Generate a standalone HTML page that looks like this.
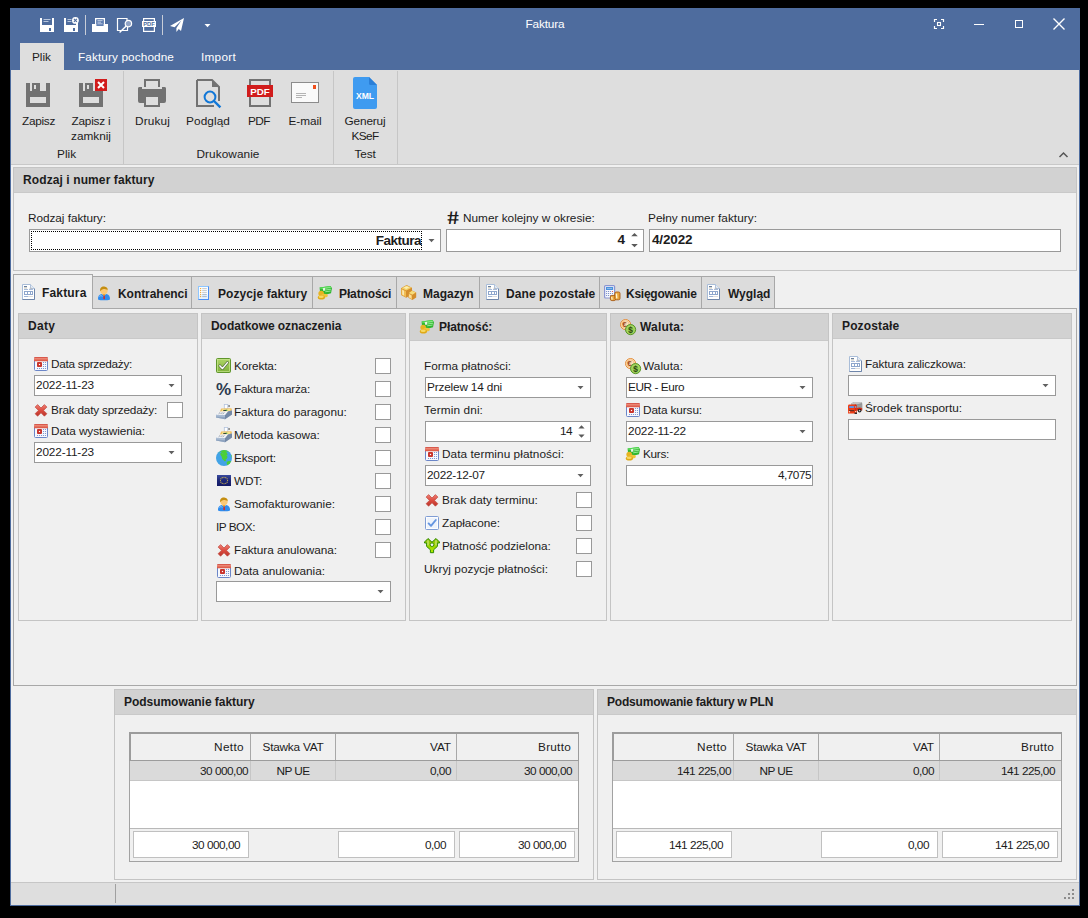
<!DOCTYPE html>
<html lang="pl"><head><meta charset="utf-8"><title>Faktura</title>
<style>
html,body{margin:0;padding:0;background:#000;}
body{width:1088px;height:918px;position:relative;overflow:hidden;font-family:"Liberation Sans",sans-serif;font-size:11.8px;color:#1c1c1c;}
div{position:absolute;box-sizing:border-box;}
.g{left:0;top:0;width:1088px;height:918px;}
.t{white-space:nowrap;line-height:16px;height:16px;}
.b{font-weight:bold;font-size:12px;}
.c{text-align:center;}
.w{color:#fff;}
svg{position:absolute;overflow:visible;}
.inp{background:#fff;border:1px solid #999;}
.chk{background:#fff;border:1px solid #999;}
</style></head><body>
<div class="g window">
<div style="left:10px;top:8px;width:1070px;height:898px;background:#f0f0f0;"></div>
<div style="left:10px;top:8px;width:1070px;height:62px;background:#4e6c9e;"></div>
<div style="left:10px;top:8px;width:1px;height:898px;background:#4e6c9e;"></div>
<div style="left:1079px;top:8px;width:1px;height:898px;background:#4e6c9e;"></div>
<div style="left:10px;top:905px;width:1070px;height:1px;background:#4e6c9e;"></div>
<div class="g titlebar">
<div class="g quick-access">
<svg style="left:39px;top:17px" width="16" height="16" viewBox="0 0 16 16"><path fill-rule="evenodd" d="M1 1H3V8H13V1H15V15H1zM10 11V14H12V11z" fill="#fff"/><path d="M4.5 2.5H11.5M4.5 4.5H9.5" stroke="#b8c6dc" stroke-width="1"/></svg>
<svg style="left:63px;top:17px" width="16" height="16" viewBox="0 0 16 16"><path fill-rule="evenodd" d="M1 1H3V8H13V6H15V15H1zM10 11V14H12V11z" fill="#fff"/><path d="M4.5 2.5H8.5M4.5 4.5H8.5" stroke="#b8c6dc" stroke-width="1"/><circle cx="12.4" cy="3.4" r="3.4" fill="#fff"/><path d="M10.9 1.9L13.9 4.9M13.9 1.9L10.9 4.9" stroke="#4e6c9e" stroke-width="1.1"/></svg>
<svg style="left:91px;top:17px" width="18" height="16" viewBox="0 0 18 16"><path d="M1 7H17V15H1z" fill="#fff"/><path fill-rule="evenodd" d="M4 1H14V10H4zM5.4 2.4V9H12.6V2.4z" fill="#fff"/><rect x="5.4" y="2.4" width="7.2" height="6.6" fill="#5f7db0"/><path d="M6.5 3.6H11.5M6.5 5.2H10M6.5 6.8H11.5" stroke="#c3cfe4" stroke-width="0.9"/></svg>
<svg style="left:116px;top:17px" width="18" height="16" viewBox="0 0 18 16"><path d="M11 4V1.5H1.5V13.5H11.5V10" fill="none" stroke="#fff" stroke-width="1.2"/><circle cx="12.4" cy="6.6" r="3.2" fill="#8fa3c6" stroke="#fff" stroke-width="1.2"/><path d="M10.2 9L3.6 15.4" stroke="#fff" stroke-width="1.4"/></svg>
<svg style="left:141px;top:17px" width="16" height="16" viewBox="0 0 16 16"><rect x="2.6" y="1.6" width="10.8" height="12.8" fill="none" stroke="#fff" stroke-width="1.2"/><rect x="1" y="4" width="14" height="6" fill="#fff"/><text x="8" y="9.2" text-anchor="middle" font-family="Liberation Sans, sans-serif" font-weight="bold" font-size="5.8" fill="#4e6c9e">PDF</text></svg>
<svg style="left:169px;top:17px" width="16" height="16" viewBox="0 0 16 16"><path d="M15 1L1 9L5.6 10.2L12.4 3.6L7.4 11L7.4 15L9.8 12L12 14z" fill="#fff"/></svg>
<div style="left:85px;top:15px;width:1px;height:20px;background:#c8cdd8;"></div>
<div style="left:162px;top:15px;width:1px;height:20px;background:#c8cdd8;"></div>
<svg style="left:204px;top:24px" width="7" height="4" viewBox="0 0 7 4"><path d="M0.5 0h6L3.5 3.2z" fill="#fff"/></svg>
</div>
<div class="t c" style="left:445px;width:200px;top:16px;letter-spacing:-0.14px;color:#fff;">Faktura</div>
<div class="g window-buttons">
<svg style="left:934px;top:19px" width="10" height="10" viewBox="0 0 10 10"><path d="M0.5 3V0.5H3M7 0.5H9.5V3M9.5 7V9.5H7M3 9.5H0.5V7" fill="none" stroke="#fff" stroke-width="1.2"/><rect x="3.5" y="3.5" width="3" height="3" fill="none" stroke="#fff" stroke-width="1.1"/></svg>
<div style="left:974px;top:24px;width:10px;height:1px;background:#fff;"></div>
<div style="left:1015px;top:20px;width:8px;height:8px;border:1px solid #fff;"></div>
<svg style="left:1053px;top:18px" width="12" height="12" viewBox="0 0 12 12"><path d="M0.5 0.5L11.5 11.5M11.5 0.5L0.5 11.5" stroke="#fff" stroke-width="1.4"/></svg>
</div>
</div>
<div class="g ribbon">
<div style="left:20px;top:43px;width:44px;height:28px;background:#dedede;"></div>
<div class="t" style="left:32px;top:49px;">Plik</div>
<div class="t" style="left:78px;top:49px;letter-spacing:0.10px;color:#fff;">Faktury pochodne</div>
<div class="t" style="left:201px;top:49px;letter-spacing:0.26px;color:#fff;">Import</div>
<div style="left:11px;top:70px;width:1068px;height:95px;background:#dedede;border-bottom:1px solid #c8c8c8;"></div>
<div style="left:123px;top:71px;width:1px;height:93px;background:#c6c6c6;"></div>
<div style="left:333px;top:71px;width:1px;height:93px;background:#c6c6c6;"></div>
<div style="left:397px;top:71px;width:1px;height:93px;background:#c6c6c6;"></div>
<div class="t c" style="left:-61.5px;width:200px;top:113px;letter-spacing:-0.29px;">Zapisz</div>
<div class="t c" style="left:-9px;width:200px;top:113px;letter-spacing:-0.21px;">Zapisz i</div>
<div class="t c" style="left:-9px;width:200px;top:128px;">zamknij</div>
<div class="t c" style="left:-33.400000000000006px;width:200px;top:146px;">Plik</div>
<div class="t c" style="left:52.5px;width:200px;top:113px;letter-spacing:0.15px;">Drukuj</div>
<div class="t c" style="left:108px;width:200px;top:113px;letter-spacing:0.10px;">Podgląd</div>
<div class="t c" style="left:159px;width:200px;top:113px;letter-spacing:-0.60px;">PDF</div>
<div class="t c" style="left:205px;width:200px;top:113px;letter-spacing:-0.07px;">E-mail</div>
<div class="t c" style="left:128px;width:200px;top:146px;letter-spacing:0.07px;">Drukowanie</div>
<div class="t c" style="left:265px;width:200px;top:113px;letter-spacing:-0.14px;">Generuj</div>
<div class="t c" style="left:265px;width:200px;top:128px;letter-spacing:-0.60px;">KSeF</div>
<div class="t c" style="left:265px;width:200px;top:146px;letter-spacing:-0.16px;">Test</div>
<svg style="left:22px;top:79px" width="32" height="32" viewBox="0 0 32 32"><path fill-rule="evenodd" d="M4 4H8V12H24V4H28V28H4zM8 18V24H24V18z" fill="#727272"/><path fill-rule="evenodd" d="M10 4H18V12H10zM12 6V10H14V6z" fill="#727272"/></svg>
<svg style="left:75px;top:79px" width="32" height="32" viewBox="0 0 32 32"><path fill-rule="evenodd" d="M4 4H8V12H28V28H4zM8 18V24H24V18z" fill="#727272"/><path fill-rule="evenodd" d="M10 4H18V12H10zM12 6V10H14V6z" fill="#727272"/><rect x="20" y="0" width="12" height="12" fill="#d11c1c"/><path d="M23 3L29 9M29 3L23 9" stroke="#fff" stroke-width="2"/></svg>
<svg style="left:136px;top:77px" width="32" height="32" viewBox="0 0 32 32"><path d="M8 2H24V12H22V4H10V12H8z" fill="#727272"/><path fill-rule="evenodd" d="M4 10H28Q30 10 30 12V24Q30 26 28 26H24V30H8V26H4Q2 26 2 24V12Q2 10 4 10zM10 20V28H22V20z" fill="#727272"/><rect x="6" y="10" width="20" height="2" fill="#dedede"/><path d="M2 12Q2 10 4 10H6V12zM26 10H28Q30 10 30 12V12H26z" fill="#727272"/></svg>
<svg style="left:192px;top:77px" width="32" height="32" viewBox="0 0 32 32"><path d="M5 3H20L27 10V24M5 3V29H22" fill="none" stroke="#727272" stroke-width="2"/><path d="M20 3V10H27z" fill="#727272"/><circle cx="18" cy="20" r="5.4" fill="#dedede" stroke="#1177d7" stroke-width="2"/><path d="M22 24L28.4 30.4" stroke="#1177d7" stroke-width="2.4"/></svg>
<svg style="left:244px;top:77px" width="32" height="32" viewBox="0 0 32 32"><rect x="6" y="3" width="20" height="26" fill="none" stroke="#727272" stroke-width="2"/><rect x="3" y="8" width="26" height="12" fill="#d11c1c"/><text x="16" y="17.6" text-anchor="middle" font-family="Liberation Sans, sans-serif" font-weight="bold" font-size="9.8" fill="#fff">PDF</text></svg>
<svg style="left:289px;top:77px" width="32" height="32" viewBox="0 0 32 32"><rect x="2.5" y="5.5" width="27" height="20" fill="#fafafa" stroke="#8c8c8c"/><rect x="24" y="8" width="3" height="4" fill="#f0501e"/><path d="M7 16.5H17M7 18.5H17M7 20.5H13" stroke="#b4b4b4" stroke-width="1"/></svg>
<svg style="left:349px;top:77px" width="32" height="32" viewBox="0 0 32 32"><path d="M6 0H20L28 8V30Q28 32 26 32H6Q4 32 4 30V2Q4 0 6 0z" fill="#3f9bf0"/><path d="M20 0L28 8H21.5Q20 8 20 6.5z" fill="#2a7fd8"/><text x="16" y="22.2" text-anchor="middle" font-family="Liberation Sans, sans-serif" font-weight="bold" font-size="8.6" fill="#fff">XML</text></svg>
<svg style="left:1059px;top:152px" width="9" height="6" viewBox="0 0 9 6"><path d="M0.5 5L4.5 1L8.5 5" fill="none" stroke="#555" stroke-width="1.5"/></svg>
</div>
<div class="g panel-rodzaj">
<div style="left:13px;top:167px;width:1064px;height:104px;background:#f0f0f0;border:1px solid #c4c4c4;"></div>
<div style="left:14px;top:168px;width:1062px;height:25px;background:#d2d2d2;border-bottom:1px solid #c9c9c9;"></div>
<div class="t b" style="left:23px;top:172px;letter-spacing:0.10px;">Rodzaj i numer faktury</div>
<div class="t" style="left:28px;top:210px;letter-spacing:-0.05px;">Rodzaj faktury:</div>
<div class="t" style="left:463px;top:210px;">Numer kolejny w okresie:</div>
<div class="t" style="left:648px;top:210px;letter-spacing:0.04px;">Pełny numer faktury:</div>
<div class="inp" style="left:29px;top:229px;width:412px;height:23px;"></div>
<div style="left:31px;top:231px;width:391px;height:19px;border:1px dotted #000;"></div>
<svg style="left:428px;top:239px" width="7" height="4" viewBox="0 0 7 4"><path d="M0.5 0h6L3.5 3.2z" fill="#606060"/></svg>
<div class="inp" style="left:446px;top:229px;width:198px;height:23px;"></div>
<svg style="left:631px;top:233px" width="7" height="14" viewBox="0 0 7 14"><path d="M0.2 3.3L3.5 0L6.8 3.3zM0.2 10.9L3.5 14.2L6.8 10.9z" fill="#5a5a5a"/></svg>
<div class="inp" style="left:649px;top:229px;width:412px;height:23px;"></div>
<div class="t b" style="right:667px;top:233px;font-size:13.5px;letter-spacing:-0.5px;">Faktura</div>
<div class="t b" style="right:463px;top:232px;font-size:13.5px;">4</div>
<div class="t b" style="left:652px;top:232px;font-size:13.5px;letter-spacing:-0.15px;">4/2022</div>
<svg style="left:446px;top:211px" width="14" height="14" viewBox="0 0 14 14"><text x="0" y="13.5" transform="matrix(1.18 0 0.12 1 0.2 -0.3)" font-family="Liberation Sans, sans-serif" font-weight="bold" font-size="18.5" fill="#1c1c1c">#</text></svg>
</div>
<div class="g tabcontrol">
<div style="left:13px;top:308px;width:1064px;height:378px;background:#f0f0f0;border:1px solid #a8a8a8;"></div>
<div style="left:13px;top:274px;width:80px;height:35px;background:#f0f0f0;border:1px solid #a8a8a8;border-bottom:none;"></div>
<div class="t b" style="left:42px;top:285px;letter-spacing:0.16px;">Faktura</div>
<div style="left:92px;top:276px;width:100px;height:33px;background:#dcdcdc;border:1px solid #a8a8a8;"></div>
<div class="t b" style="left:118px;top:286px;letter-spacing:-0.05px;">Kontrahenci</div>
<div style="left:191px;top:276px;width:122px;height:33px;background:#dcdcdc;border:1px solid #a8a8a8;"></div>
<div class="t b" style="left:218px;top:286px;letter-spacing:0.08px;">Pozycje faktury</div>
<div style="left:312px;top:276px;width:85px;height:33px;background:#dcdcdc;border:1px solid #a8a8a8;"></div>
<div class="t b" style="left:339px;top:286px;letter-spacing:-0.12px;">Płatności</div>
<div style="left:396px;top:276px;width:84px;height:33px;background:#dcdcdc;border:1px solid #a8a8a8;"></div>
<div class="t b" style="left:423px;top:286px;letter-spacing:-0.01px;">Magazyn</div>
<div style="left:479px;top:276px;width:121px;height:33px;background:#dcdcdc;border:1px solid #a8a8a8;"></div>
<div class="t b" style="left:506px;top:286px;letter-spacing:0.08px;">Dane pozostałe</div>
<div style="left:599px;top:276px;width:103px;height:33px;background:#dcdcdc;border:1px solid #a8a8a8;"></div>
<div class="t b" style="left:626px;top:286px;letter-spacing:-0.25px;">Księgowanie</div>
<div style="left:701px;top:276px;width:74px;height:33px;background:#dcdcdc;border:1px solid #a8a8a8;"></div>
<div class="t b" style="left:728px;top:286px;">Wygląd</div>
<svg style="left:21px;top:284px" width="16" height="16" viewBox="0 0 16 16"><path d="M1.5 0.5H9.5L13.5 4.5V15.5H1.5z" fill="#fff" stroke="#a9bdd8"/><path d="M13.5 4.5V15.5H1.5" fill="none" stroke="#6f86aa"/><path d="M9.5 0.5V4.5H13.5" fill="#e6edf6" stroke="#a9bdd8" stroke-width="0.9"/><rect x="3" y="2" width="3" height="1" fill="#6a7f9f"/><rect x="3" y="3.4" width="3" height="1" fill="#b9b9ad"/><rect x="3" y="5" width="4" height="0.9" fill="#9fb4d6"/><rect x="8.6" y="3.8" width="2.6" height="0.9" fill="#b8b8b8"/><rect x="8" y="5" width="4" height="0.9" fill="#9fb4d6"/><rect x="3" y="7" width="9" height="4" fill="#8ea6cc"/><rect x="4" y="8" width="2" height="2" fill="#fff"/><rect x="7" y="8" width="2" height="2" fill="#fff"/><rect x="10" y="8" width="1" height="2" fill="#fff"/><rect x="3" y="12" width="4" height="1" fill="#9fb4d6"/><rect x="7" y="12" width="5" height="1" fill="#dddddd"/></svg>
<svg style="left:96px;top:285px" width="16" height="16" viewBox="0 0 16 16"><path d="M2 14.4C1.8 11.6 3 9.6 5.4 9L8 10.2L10.6 9C13 9.6 14.2 11.6 14 14.4C11 15.6 5 15.6 2 14.4z" fill="#2f8cee"/><path d="M3.4 11.4C4.4 10.4 5.6 10.6 6.4 11.4" stroke="#8cc6ff" stroke-width="1" fill="none"/><path d="M6.4 9.2L8 11L9.6 9.2L8 8.6z" fill="#f9a825"/><path d="M7.6 10.4H8.6L9 13.4L8.1 14.4L7.3 13.4z" fill="#e0261c"/><circle cx="8" cy="5.4" r="3.7" fill="#fbc978"/><path d="M4.2 6.2C3.6 3 5.6 1.2 8.2 1.4C10.6 1.6 12 3.2 11.6 5C10.4 4.2 8.6 4.4 7.4 4C6.2 4.4 5.2 5.2 4.2 6.2z" fill="#c48e12"/></svg>
<svg style="left:197px;top:284px" width="16" height="16" viewBox="0 0 16 16"><rect x="1" y="2" width="11" height="14" fill="#4a8ef5"/><path d="M1 2H12L11 3H2V15L1 16z" fill="#8fc6ff"/><rect x="2" y="3" width="9" height="12" fill="#fbfdff"/><rect x="2" y="11" width="9" height="4" fill="#e8f3fe"/><circle cx="3.6" cy="4.6" r="0.7" fill="#f5a21f"/><rect x="5.2" y="4.1" width="4.6" height="1" fill="#c6c9ce"/><circle cx="3.6" cy="6.6" r="0.7" fill="#f5a21f"/><rect x="5.2" y="6.1" width="4.6" height="1" fill="#c6c9ce"/><circle cx="3.6" cy="8.6" r="0.7" fill="#f5a21f"/><rect x="5.2" y="8.1" width="4.6" height="1" fill="#c6c9ce"/><circle cx="3.6" cy="10.6" r="0.7" fill="#f5a21f"/><rect x="5.2" y="10.1" width="4.6" height="1" fill="#a9b9cc"/><circle cx="3.6" cy="12.6" r="0.7" fill="#f5a21f"/><rect x="5.2" y="12.1" width="4.6" height="1" fill="#a9b9cc"/></svg>
<svg style="left:317px;top:285px" width="16" height="16" viewBox="0 0 16 16"><path d="M2.6 2.6L13.6 1L15 3.2L14 8.2L7.4 10L3 6.4z" fill="#2fb52f"/><path d="M2.6 2.6L13.6 1L14.4 2.4L3.6 4.2z" fill="#55d855"/><path d="M8.2 3.2L13.6 2.6M8.6 5L14 4.2M8.2 6.8L13.6 6" stroke="#9ff09f" stroke-width="0.9"/><path d="M5.6 3.2L8 2.8L8.4 5.6L6.4 6z" fill="#e8f5e8"/><ellipse cx="4.2" cy="8.4" rx="2.8" ry="2.6" fill="#e6b422"/><ellipse cx="7.6" cy="10.6" rx="3.2" ry="1.9" fill="#f0c53a"/><ellipse cx="4.4" cy="12.4" rx="3.6" ry="2.1" fill="#e0a916"/><ellipse cx="4.2" cy="11.8" rx="2.6" ry="1.2" fill="#f7d963"/></svg>
<svg style="left:401px;top:284px" width="16" height="16" viewBox="0 0 16 16"><path d="M0 4.2L5.6 1L11 3.8V10.6L5.2 13.8L0 11z" fill="#d48d2c"/><path d="M0.4 4.2L5.6 1.4L10.6 3.8L5.2 6.6z" fill="#f5d36a"/><path d="M2.6 3.6L5.6 2.2L8.2 3.6L5.2 5z" fill="#fbeeb4"/><path d="M0.4 4.8L5 7.2V13.2L0.4 10.8z" fill="#f1bd55"/><path d="M1.2 5.8L3 6.8V11.6L1.2 10.6z" fill="#fbe7ae"/><path d="M7.4 9L11 6.4L15.2 8.4V13.6L11.4 16L7.4 13.8z" fill="#d48d2c"/><path d="M7.8 9L11 6.8L14.8 8.6L11.4 10.8z" fill="#f7dc78"/><path d="M7.8 9.6L11 11.4V15.4L7.8 13.6z" fill="#f3c869"/><path d="M8.4 10.4L9.6 11.2V14L8.4 13.2z" fill="#fcecc0"/></svg>
<svg style="left:485px;top:284px" width="16" height="16" viewBox="0 0 16 16"><path d="M1.5 0.5H9.5L13.5 4.5V15.5H1.5z" fill="#fff" stroke="#a9bdd8"/><path d="M13.5 4.5V15.5H1.5" fill="none" stroke="#6f86aa"/><path d="M9.5 0.5V4.5H13.5" fill="#e6edf6" stroke="#a9bdd8" stroke-width="0.9"/><rect x="3" y="2" width="3" height="1" fill="#6a7f9f"/><rect x="3" y="3.4" width="3" height="1" fill="#b9b9ad"/><rect x="3" y="5" width="4" height="0.9" fill="#9fb4d6"/><rect x="8.6" y="3.8" width="2.6" height="0.9" fill="#b8b8b8"/><rect x="8" y="5" width="4" height="0.9" fill="#9fb4d6"/><rect x="3" y="7" width="9" height="4" fill="#8ea6cc"/><rect x="4" y="8" width="2" height="2" fill="#fff"/><rect x="7" y="8" width="2" height="2" fill="#fff"/><rect x="10" y="8" width="1" height="2" fill="#fff"/><rect x="3" y="12" width="4" height="1" fill="#9fb4d6"/><rect x="7" y="12" width="5" height="1" fill="#dddddd"/></svg>
<svg style="left:603px;top:284px" width="18" height="17" viewBox="0 0 18 17"><rect x="1.6" y="1.6" width="10" height="12.4" rx="1" fill="#f4f7fd" stroke="#8a95d2" stroke-width="1.2"/><rect x="3" y="3" width="7.2" height="3" fill="#4b92dc"/><rect x="4" y="4.1" width="5" height="0.8" fill="#9cc6f0"/><circle cx="3.6" cy="7.5" r="0.62" fill="#6c80c2"/><circle cx="3.6" cy="9.5" r="0.62" fill="#6c80c2"/><circle cx="3.6" cy="11.5" r="0.62" fill="#6c80c2"/><circle cx="5.55" cy="7.5" r="0.62" fill="#6c80c2"/><circle cx="5.55" cy="9.5" r="0.62" fill="#6c80c2"/><circle cx="5.55" cy="11.5" r="0.62" fill="#6c80c2"/><circle cx="7.5" cy="7.5" r="0.62" fill="#6c80c2"/><circle cx="7.5" cy="9.5" r="0.62" fill="#6c80c2"/><circle cx="7.5" cy="11.5" r="0.62" fill="#6c80c2"/><circle cx="9.5" cy="7.5" r="0.62" fill="#e8483c"/><circle cx="9.5" cy="9.5" r="0.62" fill="#6c80c2"/><circle cx="9.5" cy="11.5" r="0.62" fill="#6c80c2"/><rect x="7.4" y="11.4" width="5.2" height="5.2" rx="1.4" fill="#e9a63c" stroke="#a85a14" stroke-width="0.9"/><path d="M8.6 13L9.2 15.6" stroke="#fff3cf" stroke-width="1.2"/><rect x="11.8" y="8" width="5.2" height="7.8" rx="1.4" fill="#e9a63c" stroke="#a85a14" stroke-width="0.9"/><path d="M13.4 9.6L13.8 14.4" stroke="#fff3cf" stroke-width="1.4"/></svg>
<svg style="left:706px;top:284px" width="16" height="16" viewBox="0 0 16 16"><path d="M1.5 0.5H9.5L13.5 4.5V15.5H1.5z" fill="#fff" stroke="#a9bdd8"/><path d="M13.5 4.5V15.5H1.5" fill="none" stroke="#6f86aa"/><path d="M9.5 0.5V4.5H13.5" fill="#e6edf6" stroke="#a9bdd8" stroke-width="0.9"/><rect x="3" y="2" width="3" height="1" fill="#6a7f9f"/><rect x="3" y="3.4" width="3" height="1" fill="#b9b9ad"/><rect x="3" y="5" width="4" height="0.9" fill="#9fb4d6"/><rect x="8.6" y="3.8" width="2.6" height="0.9" fill="#b8b8b8"/><rect x="8" y="5" width="4" height="0.9" fill="#9fb4d6"/><rect x="3" y="7" width="9" height="4" fill="#8ea6cc"/><rect x="4" y="8" width="2" height="2" fill="#fff"/><rect x="7" y="8" width="2" height="2" fill="#fff"/><rect x="10" y="8" width="1" height="2" fill="#fff"/><rect x="3" y="12" width="4" height="1" fill="#9fb4d6"/><rect x="7" y="12" width="5" height="1" fill="#dddddd"/></svg>
<div class="g tabpage">
<div style="left:18px;top:313px;width:180px;height:308px;background:#f0f0f0;border:1px solid #c4c4c4;"></div>
<div style="left:19px;top:314px;width:178px;height:25px;background:#d2d2d2;border-bottom:1px solid #c9c9c9;"></div>
<div class="t b" style="left:28px;top:318px;letter-spacing:0.30px;">Daty</div>
<div style="left:201px;top:313px;width:205px;height:308px;background:#f0f0f0;border:1px solid #c4c4c4;"></div>
<div style="left:202px;top:314px;width:203px;height:25px;background:#d2d2d2;border-bottom:1px solid #c9c9c9;"></div>
<div class="t b" style="left:211px;top:318px;letter-spacing:-0.05px;">Dodatkowe oznaczenia</div>
<div style="left:409px;top:313px;width:198px;height:308px;background:#f0f0f0;border:1px solid #c4c4c4;"></div>
<div style="left:410px;top:314px;width:196px;height:27px;background:#d2d2d2;border-bottom:1px solid #c9c9c9;"></div>
<div class="t b" style="left:439px;top:319px;letter-spacing:-0.10px;">Płatność:</div>
<div style="left:610px;top:313px;width:219px;height:308px;background:#f0f0f0;border:1px solid #c4c4c4;"></div>
<div style="left:611px;top:314px;width:217px;height:27px;background:#d2d2d2;border-bottom:1px solid #c9c9c9;"></div>
<div class="t b" style="left:640px;top:319px;letter-spacing:0.19px;">Waluta:</div>
<div style="left:832px;top:313px;width:240px;height:308px;background:#f0f0f0;border:1px solid #c4c4c4;"></div>
<div style="left:833px;top:314px;width:238px;height:25px;background:#d2d2d2;border-bottom:1px solid #c9c9c9;"></div>
<div class="t b" style="left:842px;top:318px;letter-spacing:0.14px;">Pozostałe</div>
<div class="g group-daty">
<svg style="left:33px;top:356px" width="16" height="16" viewBox="0 0 16 16"><defs><linearGradient id="gcal" x1="0" y1="0" x2="0" y2="1"><stop offset="0" stop-color="#c9392f"/><stop offset="0.3" stop-color="#ee8a78"/><stop offset="1" stop-color="#d8503f"/></linearGradient></defs><rect x="1.5" y="1.5" width="13" height="13" rx="1" fill="#f7f9fe" stroke="#6b86c8"/><path d="M1 2.2Q1 1 2.2 1H13.8Q15 1 15 2.2V5.2H1z" fill="url(#gcal)"/><rect x="4" y="6" width="5" height="5" rx="0.9" fill="#c9332b"/><rect x="5.9" y="7.9" width="1.2" height="1.2" fill="#fff"/><circle cx="10.5" cy="6.5" r="0.62" fill="#6f88c8"/><circle cx="10.5" cy="8.5" r="0.62" fill="#6f88c8"/><circle cx="10.5" cy="10.5" r="0.62" fill="#6f88c8"/><circle cx="12.5" cy="6.5" r="0.62" fill="#6f88c8"/><circle cx="12.5" cy="8.5" r="0.62" fill="#6f88c8"/><circle cx="12.5" cy="10.5" r="0.62" fill="#6f88c8"/><circle cx="4.5" cy="12.5" r="0.62" fill="#6f88c8"/><circle cx="6.5" cy="12.5" r="0.62" fill="#6f88c8"/><circle cx="8.5" cy="12.5" r="0.62" fill="#6f88c8"/><circle cx="10.5" cy="12.5" r="0.62" fill="#6f88c8"/><circle cx="12.5" cy="12.5" r="0.62" fill="#6f88c8"/></svg>
<div class="t" style="left:51px;top:356px;letter-spacing:-0.28px;">Data sprzedaży:</div>
<div class="inp" style="left:34px;top:375px;width:148px;height:21px;"></div>
<div class="t" style="left:36px;top:377px;letter-spacing:-0.15px;">2022-11-23</div>
<svg style="left:168px;top:384px" width="7" height="4" viewBox="0 0 7 4"><path d="M0.5 0h6L3.5 3.2z" fill="#606060"/></svg>
<svg style="left:33px;top:402px" width="16" height="16" viewBox="0 0 16 16"><defs><linearGradient id="gx" x1="0" y1="0" x2="0" y2="1"><stop offset="0" stop-color="#ee8076"/><stop offset="0.5" stop-color="#dc4c40"/><stop offset="1" stop-color="#b9352b"/></linearGradient></defs><path d="M4.6 2.6L8 6L11.4 2.6L13.9 5.1L10.5 8.4L13.9 11.7L11.4 14.2L8 10.8L4.6 14.2L2.1 11.7L5.5 8.4L2.1 5.1z" fill="url(#gx)" stroke="#c0473d" stroke-width="0.7" stroke-linejoin="round"/></svg>
<div class="t" style="left:51px;top:402px;letter-spacing:-0.21px;">Brak daty sprzedaży:</div>
<div class="chk" style="left:167px;top:402px;width:16px;height:16px;"></div>
<svg style="left:33px;top:423px" width="16" height="16" viewBox="0 0 16 16"><defs><linearGradient id="gcal" x1="0" y1="0" x2="0" y2="1"><stop offset="0" stop-color="#c9392f"/><stop offset="0.3" stop-color="#ee8a78"/><stop offset="1" stop-color="#d8503f"/></linearGradient></defs><rect x="1.5" y="1.5" width="13" height="13" rx="1" fill="#f7f9fe" stroke="#6b86c8"/><path d="M1 2.2Q1 1 2.2 1H13.8Q15 1 15 2.2V5.2H1z" fill="url(#gcal)"/><rect x="4" y="6" width="5" height="5" rx="0.9" fill="#c9332b"/><rect x="5.9" y="7.9" width="1.2" height="1.2" fill="#fff"/><circle cx="10.5" cy="6.5" r="0.62" fill="#6f88c8"/><circle cx="10.5" cy="8.5" r="0.62" fill="#6f88c8"/><circle cx="10.5" cy="10.5" r="0.62" fill="#6f88c8"/><circle cx="12.5" cy="6.5" r="0.62" fill="#6f88c8"/><circle cx="12.5" cy="8.5" r="0.62" fill="#6f88c8"/><circle cx="12.5" cy="10.5" r="0.62" fill="#6f88c8"/><circle cx="4.5" cy="12.5" r="0.62" fill="#6f88c8"/><circle cx="6.5" cy="12.5" r="0.62" fill="#6f88c8"/><circle cx="8.5" cy="12.5" r="0.62" fill="#6f88c8"/><circle cx="10.5" cy="12.5" r="0.62" fill="#6f88c8"/><circle cx="12.5" cy="12.5" r="0.62" fill="#6f88c8"/></svg>
<div class="t" style="left:51px;top:423px;letter-spacing:-0.06px;">Data wystawienia:</div>
<div class="inp" style="left:34px;top:442px;width:148px;height:21px;"></div>
<div class="t" style="left:36px;top:444px;letter-spacing:-0.15px;">2022-11-23</div>
<svg style="left:168px;top:451px" width="7" height="4" viewBox="0 0 7 4"><path d="M0.5 0h6L3.5 3.2z" fill="#606060"/></svg>
</div>
<div class="g group-dodatkowe">
<svg style="left:216px;top:358px" width="16" height="16" viewBox="0 0 16 16"><defs><linearGradient id="gck" x1="0" y1="0" x2="0" y2="1"><stop offset="0" stop-color="#b0d768"/><stop offset="1" stop-color="#7db038"/></linearGradient></defs><rect x="0.5" y="0.5" width="14" height="14" rx="1" fill="url(#gck)" stroke="#5f962c"/><rect x="1.5" y="1.5" width="12" height="12" fill="none" stroke="#c9e690" stroke-width="0.7"/><path d="M3.8 7.8L6.4 10.6L11.4 4.6" fill="none" stroke="#5c7346" stroke-width="2.8" stroke-linecap="round" stroke-linejoin="round"/><path d="M3.8 7.8L6.4 10.6L11.4 4.6" fill="none" stroke="#fff" stroke-width="1.4" stroke-linecap="round" stroke-linejoin="round"/></svg>
<div class="t" style="left:234px;top:358px;letter-spacing:-0.12px;">Korekta:</div>
<div class="chk" style="left:375px;top:358px;width:16px;height:16px;"></div>
<svg style="left:216px;top:381px" width="16" height="16" viewBox="0 0 16 16"><text x="7.6" y="14" text-anchor="middle" font-family="Liberation Sans, sans-serif" font-weight="bold" font-size="17" fill="#2b3a4e">%</text></svg>
<div class="t" style="left:234px;top:381px;letter-spacing:-0.24px;">Faktura marża:</div>
<div class="chk" style="left:375px;top:381px;width:16px;height:16px;"></div>
<svg style="left:216px;top:404px" width="16" height="16" viewBox="0 0 16 16"><rect x="8.3" y="0.4" width="3.5" height="4.6" fill="#fdfeff" stroke="#b4c3dc" stroke-width="0.8"/><rect x="12.2" y="1.2" width="1.8" height="1.6" fill="#7f7f7f"/><path d="M5.2 4.4L15.4 4.2L16 6L15 7.6L3.8 7.8z" fill="#f0bf62"/><path d="M6.4 5.2L14.4 5L14 6.8L5.8 7z" fill="#f7e78e"/><path d="M7.4 5.9L11.2 5.7L11 6.9L7.2 7z" fill="#34463a"/><rect x="10" y="5.9" width="1.2" height="0.9" fill="#4fc04a"/><path d="M0 10.4L9 11L12 7.4L16 6.4V10.6L9 15.2L0 13.6z" fill="#a9bbd2"/><path d="M9 11L12 7.4L16 6.4V10.6L9 15.2z" fill="#7489a6"/><path d="M0 12.4L9 13.2L9 15.2L0 13.6z" fill="#8ea3bf"/><path d="M1.4 8.4L4.6 7.4L12 7.3L9 11L0.4 10.4z" fill="#f1f3f6"/><path d="M2.6 9.8L4.2 8.4M4.6 10L6.2 8.4M6.6 10.2L8.2 8.4" stroke="#8b95a3" stroke-width="0.9"/></svg>
<div class="t" style="left:234px;top:404px;">Faktura do paragonu:</div>
<div class="chk" style="left:375px;top:404px;width:16px;height:16px;"></div>
<svg style="left:216px;top:427px" width="16" height="16" viewBox="0 0 16 16"><rect x="8.3" y="0.4" width="3.5" height="4.6" fill="#fdfeff" stroke="#b4c3dc" stroke-width="0.8"/><rect x="12.2" y="1.2" width="1.8" height="1.6" fill="#7f7f7f"/><path d="M5.2 4.4L15.4 4.2L16 6L15 7.6L3.8 7.8z" fill="#f0bf62"/><path d="M6.4 5.2L14.4 5L14 6.8L5.8 7z" fill="#f7e78e"/><path d="M7.4 5.9L11.2 5.7L11 6.9L7.2 7z" fill="#34463a"/><rect x="10" y="5.9" width="1.2" height="0.9" fill="#4fc04a"/><path d="M0 10.4L9 11L12 7.4L16 6.4V10.6L9 15.2L0 13.6z" fill="#a9bbd2"/><path d="M9 11L12 7.4L16 6.4V10.6L9 15.2z" fill="#7489a6"/><path d="M0 12.4L9 13.2L9 15.2L0 13.6z" fill="#8ea3bf"/><path d="M1.4 8.4L4.6 7.4L12 7.3L9 11L0.4 10.4z" fill="#f1f3f6"/><path d="M2.6 9.8L4.2 8.4M4.6 10L6.2 8.4M6.6 10.2L8.2 8.4" stroke="#8b95a3" stroke-width="0.9"/></svg>
<div class="t" style="left:234px;top:427px;">Metoda kasowa:</div>
<div class="chk" style="left:375px;top:427px;width:16px;height:16px;"></div>
<svg style="left:216px;top:450px" width="16" height="16" viewBox="0 0 16 16"><defs><clipPath id="cgl"><circle cx="8" cy="8" r="8"/></clipPath></defs><circle cx="8" cy="8" r="8" fill="#42a3e6"/><g clip-path="url(#cgl)" fill="#4ccf35"><path d="M2.4 3.4C4 0.6 7 -0.4 9 -0.2C11.4 0 13.4 1.4 14.6 3.2C13 2 11.6 1.6 10.4 1.6L10.2 3C8.8 3 7 3.2 5.8 3C5.2 2.4 5.6 1.6 5.2 1.4C4.2 1.8 3.2 2.6 2.4 3.4z"/><path d="M4.2 3.4L5.4 2.6L6.6 3.4L8.8 2.4L11 2.6L11.6 5.2L10 5.6L11.6 6.8L10.8 8.8L9.4 9.4L10.2 10.8L8.8 11.6L7.4 10L6.2 9L5.6 6.6L4.6 5.2z"/><path d="M10.8 11.8L13 11L15.4 11.2L14 14L11.6 15.4L10.6 13.2z"/><path d="M15 4.6L16.4 5V8.4L15.4 7z"/></g></svg>
<div class="t" style="left:234px;top:450px;letter-spacing:-0.16px;">Eksport:</div>
<div class="chk" style="left:375px;top:450px;width:16px;height:16px;"></div>
<svg style="left:216px;top:473px" width="16" height="16" viewBox="0 0 16 16"><defs><linearGradient id="geu" x1="0" y1="0" x2="0" y2="1"><stop offset="0" stop-color="#3a4a9e"/><stop offset="0.5" stop-color="#1c2676"/><stop offset="1" stop-color="#141a66"/></linearGradient></defs><rect x="1" y="2" width="14" height="11" fill="url(#geu)"/><circle cx="11.60" cy="7.50" r="0.55" fill="#e7c84a"/><circle cx="11.12" cy="9.15" r="0.55" fill="#e7c84a"/><circle cx="9.80" cy="10.36" r="0.55" fill="#e7c84a"/><circle cx="8.00" cy="10.80" r="0.55" fill="#e7c84a"/><circle cx="6.20" cy="10.36" r="0.55" fill="#e7c84a"/><circle cx="4.88" cy="9.15" r="0.55" fill="#e7c84a"/><circle cx="4.40" cy="7.50" r="0.55" fill="#e7c84a"/><circle cx="4.88" cy="5.85" r="0.55" fill="#e7c84a"/><circle cx="6.20" cy="4.64" r="0.55" fill="#e7c84a"/><circle cx="8.00" cy="4.20" r="0.55" fill="#e7c84a"/><circle cx="9.80" cy="4.64" r="0.55" fill="#e7c84a"/><circle cx="11.12" cy="5.85" r="0.55" fill="#e7c84a"/></svg>
<div class="t" style="left:234px;top:473px;letter-spacing:-0.21px;">WDT:</div>
<div class="chk" style="left:375px;top:473px;width:16px;height:16px;"></div>
<svg style="left:216px;top:496px" width="16" height="16" viewBox="0 0 16 16"><path d="M2 14.4C1.8 11.6 3 9.6 5.4 9L8 10.2L10.6 9C13 9.6 14.2 11.6 14 14.4C11 15.6 5 15.6 2 14.4z" fill="#2f8cee"/><path d="M3.4 11.4C4.4 10.4 5.6 10.6 6.4 11.4" stroke="#8cc6ff" stroke-width="1" fill="none"/><path d="M6.4 9.2L8 11L9.6 9.2L8 8.6z" fill="#f9a825"/><path d="M7.6 10.4H8.6L9 13.4L8.1 14.4L7.3 13.4z" fill="#e0261c"/><circle cx="8" cy="5.4" r="3.7" fill="#fbc978"/><path d="M4.2 6.2C3.6 3 5.6 1.2 8.2 1.4C10.6 1.6 12 3.2 11.6 5C10.4 4.2 8.6 4.4 7.4 4C6.2 4.4 5.2 5.2 4.2 6.2z" fill="#c48e12"/></svg>
<div class="t" style="left:234px;top:496px;">Samofakturowanie:</div>
<div class="chk" style="left:375px;top:496px;width:16px;height:16px;"></div>
<div class="t" style="left:216px;top:519px;letter-spacing:-0.49px;">IP BOX:</div>
<div class="chk" style="left:375px;top:519px;width:16px;height:16px;"></div>
<svg style="left:216px;top:542px" width="16" height="16" viewBox="0 0 16 16"><defs><linearGradient id="gx" x1="0" y1="0" x2="0" y2="1"><stop offset="0" stop-color="#ee8076"/><stop offset="0.5" stop-color="#dc4c40"/><stop offset="1" stop-color="#b9352b"/></linearGradient></defs><path d="M4.6 2.6L8 6L11.4 2.6L13.9 5.1L10.5 8.4L13.9 11.7L11.4 14.2L8 10.8L4.6 14.2L2.1 11.7L5.5 8.4L2.1 5.1z" fill="url(#gx)" stroke="#c0473d" stroke-width="0.7" stroke-linejoin="round"/></svg>
<div class="t" style="left:234px;top:542px;letter-spacing:-0.03px;">Faktura anulowana:</div>
<div class="chk" style="left:375px;top:542px;width:16px;height:16px;"></div>
<svg style="left:216px;top:563px" width="16" height="16" viewBox="0 0 16 16"><defs><linearGradient id="gcal" x1="0" y1="0" x2="0" y2="1"><stop offset="0" stop-color="#c9392f"/><stop offset="0.3" stop-color="#ee8a78"/><stop offset="1" stop-color="#d8503f"/></linearGradient></defs><rect x="1.5" y="1.5" width="13" height="13" rx="1" fill="#f7f9fe" stroke="#6b86c8"/><path d="M1 2.2Q1 1 2.2 1H13.8Q15 1 15 2.2V5.2H1z" fill="url(#gcal)"/><rect x="4" y="6" width="5" height="5" rx="0.9" fill="#c9332b"/><rect x="5.9" y="7.9" width="1.2" height="1.2" fill="#fff"/><circle cx="10.5" cy="6.5" r="0.62" fill="#6f88c8"/><circle cx="10.5" cy="8.5" r="0.62" fill="#6f88c8"/><circle cx="10.5" cy="10.5" r="0.62" fill="#6f88c8"/><circle cx="12.5" cy="6.5" r="0.62" fill="#6f88c8"/><circle cx="12.5" cy="8.5" r="0.62" fill="#6f88c8"/><circle cx="12.5" cy="10.5" r="0.62" fill="#6f88c8"/><circle cx="4.5" cy="12.5" r="0.62" fill="#6f88c8"/><circle cx="6.5" cy="12.5" r="0.62" fill="#6f88c8"/><circle cx="8.5" cy="12.5" r="0.62" fill="#6f88c8"/><circle cx="10.5" cy="12.5" r="0.62" fill="#6f88c8"/><circle cx="12.5" cy="12.5" r="0.62" fill="#6f88c8"/></svg>
<div class="t" style="left:234px;top:563px;letter-spacing:-0.01px;">Data anulowania:</div>
<div class="inp" style="left:216px;top:581px;width:175px;height:21px;"></div>
<svg style="left:377px;top:590px" width="7" height="4" viewBox="0 0 7 4"><path d="M0.5 0h6L3.5 3.2z" fill="#606060"/></svg>
</div>
<div class="g group-platnosc">
<svg style="left:419px;top:319px" width="16" height="16" viewBox="0 0 16 16"><path d="M2.6 2.6L13.6 1L15 3.2L14 8.2L7.4 10L3 6.4z" fill="#2fb52f"/><path d="M2.6 2.6L13.6 1L14.4 2.4L3.6 4.2z" fill="#55d855"/><path d="M8.2 3.2L13.6 2.6M8.6 5L14 4.2M8.2 6.8L13.6 6" stroke="#9ff09f" stroke-width="0.9"/><path d="M5.6 3.2L8 2.8L8.4 5.6L6.4 6z" fill="#e8f5e8"/><ellipse cx="4.2" cy="8.4" rx="2.8" ry="2.6" fill="#e6b422"/><ellipse cx="7.6" cy="10.6" rx="3.2" ry="1.9" fill="#f0c53a"/><ellipse cx="4.4" cy="12.4" rx="3.6" ry="2.1" fill="#e0a916"/><ellipse cx="4.2" cy="11.8" rx="2.6" ry="1.2" fill="#f7d963"/></svg>
<div class="t" style="left:424px;top:358px;letter-spacing:-0.01px;">Forma płatności:</div>
<div class="inp" style="left:425px;top:377px;width:166px;height:21px;"></div>
<div class="t" style="left:427px;top:379px;letter-spacing:-0.17px;">Przelew 14 dni</div>
<svg style="left:577px;top:386px" width="7" height="4" viewBox="0 0 7 4"><path d="M0.5 0h6L3.5 3.2z" fill="#606060"/></svg>
<div class="t" style="left:424px;top:402px;letter-spacing:0.12px;">Termin dni:</div>
<div class="inp" style="left:425px;top:421px;width:166px;height:21px;"></div>
<div class="t" style="right:516px;top:423px;letter-spacing:-0.56px;">14</div>
<svg style="left:578px;top:425px" width="7" height="13" viewBox="0 0 7 13"><path d="M0.4 3.4L3.5 0.3L6.6 3.4zM0.4 9.6L3.5 12.7L6.6 9.6z" fill="#5a5a5a"/></svg>
<svg style="left:424px;top:446px" width="16" height="16" viewBox="0 0 16 16"><defs><linearGradient id="gcal" x1="0" y1="0" x2="0" y2="1"><stop offset="0" stop-color="#c9392f"/><stop offset="0.3" stop-color="#ee8a78"/><stop offset="1" stop-color="#d8503f"/></linearGradient></defs><rect x="1.5" y="1.5" width="13" height="13" rx="1" fill="#f7f9fe" stroke="#6b86c8"/><path d="M1 2.2Q1 1 2.2 1H13.8Q15 1 15 2.2V5.2H1z" fill="url(#gcal)"/><rect x="4" y="6" width="5" height="5" rx="0.9" fill="#c9332b"/><rect x="5.9" y="7.9" width="1.2" height="1.2" fill="#fff"/><circle cx="10.5" cy="6.5" r="0.62" fill="#6f88c8"/><circle cx="10.5" cy="8.5" r="0.62" fill="#6f88c8"/><circle cx="10.5" cy="10.5" r="0.62" fill="#6f88c8"/><circle cx="12.5" cy="6.5" r="0.62" fill="#6f88c8"/><circle cx="12.5" cy="8.5" r="0.62" fill="#6f88c8"/><circle cx="12.5" cy="10.5" r="0.62" fill="#6f88c8"/><circle cx="4.5" cy="12.5" r="0.62" fill="#6f88c8"/><circle cx="6.5" cy="12.5" r="0.62" fill="#6f88c8"/><circle cx="8.5" cy="12.5" r="0.62" fill="#6f88c8"/><circle cx="10.5" cy="12.5" r="0.62" fill="#6f88c8"/><circle cx="12.5" cy="12.5" r="0.62" fill="#6f88c8"/></svg>
<div class="t" style="left:442px;top:446px;letter-spacing:0.06px;">Data terminu płatności:</div>
<div class="inp" style="left:425px;top:465px;width:166px;height:21px;"></div>
<div class="t" style="left:427px;top:467px;letter-spacing:-0.24px;">2022-12-07</div>
<svg style="left:577px;top:474px" width="7" height="4" viewBox="0 0 7 4"><path d="M0.5 0h6L3.5 3.2z" fill="#606060"/></svg>
<svg style="left:424px;top:492px" width="16" height="16" viewBox="0 0 16 16"><defs><linearGradient id="gx" x1="0" y1="0" x2="0" y2="1"><stop offset="0" stop-color="#ee8076"/><stop offset="0.5" stop-color="#dc4c40"/><stop offset="1" stop-color="#b9352b"/></linearGradient></defs><path d="M4.6 2.6L8 6L11.4 2.6L13.9 5.1L10.5 8.4L13.9 11.7L11.4 14.2L8 10.8L4.6 14.2L2.1 11.7L5.5 8.4L2.1 5.1z" fill="url(#gx)" stroke="#c0473d" stroke-width="0.7" stroke-linejoin="round"/></svg>
<div class="t" style="left:442px;top:492px;letter-spacing:0.01px;">Brak daty terminu:</div>
<div class="chk" style="left:576px;top:492px;width:16px;height:16px;"></div>
<svg style="left:424px;top:515px" width="16" height="16" viewBox="0 0 16 16"><rect x="1.5" y="1.5" width="13" height="13" rx="1" fill="#eef3fb" stroke="#809dd4"/><rect x="2.5" y="2.5" width="11" height="11" fill="none" stroke="#fff" stroke-width="0.8"/><path d="M4.6 8.4L7 10.8L11.8 5" fill="none" stroke="#6495e0" stroke-width="1.9" stroke-linecap="round" stroke-linejoin="round"/></svg>
<div class="t" style="left:442px;top:515px;letter-spacing:-0.04px;">Zapłacone:</div>
<div class="chk" style="left:576px;top:515px;width:16px;height:16px;"></div>
<svg style="left:424px;top:538px" width="16" height="16" viewBox="0 0 16 16"><defs><linearGradient id="gsp" x1="0" y1="0" x2="0" y2="1"><stop offset="0" stop-color="#8cc200"/><stop offset="0.5" stop-color="#9ad000"/><stop offset="1" stop-color="#b2f000"/></linearGradient></defs><path d="M4 0.5L8 4.2L12 0.5L15.5 4V5H13.4V8.4L9.6 11.8V14.7H6.4V11.8L2.6 8.4V5H0.5V4z" fill="url(#gsp)" stroke="#2f8a00" stroke-width="1" stroke-linejoin="round"/><path d="M4 2.2V7.4M12 2.2V7.4" stroke="#d8ee9a" stroke-width="1"/><circle cx="8" cy="6.7" r="1.8" fill="#f4f4f4" stroke="#2f8a00" stroke-width="0.9"/></svg>
<div class="t" style="left:442px;top:538px;">Płatność podzielona:</div>
<div class="chk" style="left:576px;top:538px;width:16px;height:16px;"></div>
<div class="t" style="left:424px;top:561px;letter-spacing:0.03px;">Ukryj pozycje płatności:</div>
<div class="chk" style="left:576px;top:561px;width:16px;height:16px;"></div>
</div>
<div class="g group-waluta">
<svg style="left:620px;top:319px" width="16" height="16" viewBox="0 0 16 16"><circle cx="5.6" cy="5.6" r="5.1" fill="#fbe0b6" stroke="#e48e3e" stroke-width="1"/><circle cx="5.6" cy="5.6" r="3.7" fill="none" stroke="#f0b57a" stroke-width="0.7"/><text x="4.6" y="8.4" text-anchor="middle" font-family="Liberation Sans, sans-serif" font-weight="bold" font-size="8" fill="#a24d1c">€</text><circle cx="10.6" cy="10.6" r="5.1" fill="#94c94e" stroke="#5a962b" stroke-width="1"/><circle cx="10.6" cy="10.6" r="3.7" fill="none" stroke="#b4de76" stroke-width="0.7"/><text x="10.6" y="13.6" text-anchor="middle" font-family="Liberation Sans, sans-serif" font-weight="bold" font-size="8.2" fill="#2c4a12">$</text></svg>
<svg style="left:625px;top:358px" width="16" height="16" viewBox="0 0 16 16"><circle cx="5.6" cy="5.6" r="5.1" fill="#fbe0b6" stroke="#e48e3e" stroke-width="1"/><circle cx="5.6" cy="5.6" r="3.7" fill="none" stroke="#f0b57a" stroke-width="0.7"/><text x="4.6" y="8.4" text-anchor="middle" font-family="Liberation Sans, sans-serif" font-weight="bold" font-size="8" fill="#a24d1c">€</text><circle cx="10.6" cy="10.6" r="5.1" fill="#94c94e" stroke="#5a962b" stroke-width="1"/><circle cx="10.6" cy="10.6" r="3.7" fill="none" stroke="#b4de76" stroke-width="0.7"/><text x="10.6" y="13.6" text-anchor="middle" font-family="Liberation Sans, sans-serif" font-weight="bold" font-size="8.2" fill="#2c4a12">$</text></svg>
<div class="t" style="left:643px;top:358px;letter-spacing:0.06px;">Waluta:</div>
<div class="inp" style="left:626px;top:377px;width:187px;height:21px;"></div>
<div class="t" style="left:628px;top:379px;letter-spacing:-0.43px;">EUR - Euro</div>
<svg style="left:799px;top:386px" width="7" height="4" viewBox="0 0 7 4"><path d="M0.5 0h6L3.5 3.2z" fill="#606060"/></svg>
<svg style="left:625px;top:402px" width="16" height="16" viewBox="0 0 16 16"><defs><linearGradient id="gcal" x1="0" y1="0" x2="0" y2="1"><stop offset="0" stop-color="#c9392f"/><stop offset="0.3" stop-color="#ee8a78"/><stop offset="1" stop-color="#d8503f"/></linearGradient></defs><rect x="1.5" y="1.5" width="13" height="13" rx="1" fill="#f7f9fe" stroke="#6b86c8"/><path d="M1 2.2Q1 1 2.2 1H13.8Q15 1 15 2.2V5.2H1z" fill="url(#gcal)"/><rect x="4" y="6" width="5" height="5" rx="0.9" fill="#c9332b"/><rect x="5.9" y="7.9" width="1.2" height="1.2" fill="#fff"/><circle cx="10.5" cy="6.5" r="0.62" fill="#6f88c8"/><circle cx="10.5" cy="8.5" r="0.62" fill="#6f88c8"/><circle cx="10.5" cy="10.5" r="0.62" fill="#6f88c8"/><circle cx="12.5" cy="6.5" r="0.62" fill="#6f88c8"/><circle cx="12.5" cy="8.5" r="0.62" fill="#6f88c8"/><circle cx="12.5" cy="10.5" r="0.62" fill="#6f88c8"/><circle cx="4.5" cy="12.5" r="0.62" fill="#6f88c8"/><circle cx="6.5" cy="12.5" r="0.62" fill="#6f88c8"/><circle cx="8.5" cy="12.5" r="0.62" fill="#6f88c8"/><circle cx="10.5" cy="12.5" r="0.62" fill="#6f88c8"/><circle cx="12.5" cy="12.5" r="0.62" fill="#6f88c8"/></svg>
<div class="t" style="left:643px;top:402px;letter-spacing:-0.12px;">Data kursu:</div>
<div class="inp" style="left:626px;top:421px;width:187px;height:21px;"></div>
<div class="t" style="left:628px;top:423px;letter-spacing:-0.15px;">2022-11-22</div>
<svg style="left:799px;top:430px" width="7" height="4" viewBox="0 0 7 4"><path d="M0.5 0h6L3.5 3.2z" fill="#606060"/></svg>
<svg style="left:625px;top:446px" width="16" height="16" viewBox="0 0 16 16"><path d="M2.6 2.6L13.6 1L15 3.2L14 8.2L7.4 10L3 6.4z" fill="#2fb52f"/><path d="M2.6 2.6L13.6 1L14.4 2.4L3.6 4.2z" fill="#55d855"/><path d="M8.2 3.2L13.6 2.6M8.6 5L14 4.2M8.2 6.8L13.6 6" stroke="#9ff09f" stroke-width="0.9"/><path d="M5.6 3.2L8 2.8L8.4 5.6L6.4 6z" fill="#e8f5e8"/><ellipse cx="4.2" cy="8.4" rx="2.8" ry="2.6" fill="#e6b422"/><ellipse cx="7.6" cy="10.6" rx="3.2" ry="1.9" fill="#f0c53a"/><ellipse cx="4.4" cy="12.4" rx="3.6" ry="2.1" fill="#e0a916"/><ellipse cx="4.2" cy="11.8" rx="2.6" ry="1.2" fill="#f7d963"/></svg>
<div class="t" style="left:643px;top:446px;letter-spacing:-0.31px;">Kurs:</div>
<div class="inp" style="left:626px;top:465px;width:187px;height:21px;"></div>
<div class="t" style="right:277px;top:467px;letter-spacing:-0.52px;">4,7075</div>
</div>
<div class="g group-pozostale">
<svg style="left:848px;top:356px" width="16" height="16" viewBox="0 0 16 16"><path d="M1.5 0.5H9.5L13.5 4.5V15.5H1.5z" fill="#fff" stroke="#a9bdd8"/><path d="M13.5 4.5V15.5H1.5" fill="none" stroke="#6f86aa"/><path d="M9.5 0.5V4.5H13.5" fill="#e6edf6" stroke="#a9bdd8" stroke-width="0.9"/><rect x="3" y="2" width="3" height="1" fill="#6a7f9f"/><rect x="3" y="3.4" width="3" height="1" fill="#b9b9ad"/><rect x="3" y="5" width="4" height="0.9" fill="#9fb4d6"/><rect x="8.6" y="3.8" width="2.6" height="0.9" fill="#b8b8b8"/><rect x="8" y="5" width="4" height="0.9" fill="#9fb4d6"/><rect x="3" y="7" width="9" height="4" fill="#8ea6cc"/><rect x="4" y="8" width="2" height="2" fill="#fff"/><rect x="7" y="8" width="2" height="2" fill="#fff"/><rect x="10" y="8" width="1" height="2" fill="#fff"/><rect x="3" y="12" width="4" height="1" fill="#9fb4d6"/><rect x="7" y="12" width="5" height="1" fill="#dddddd"/></svg>
<div class="t" style="left:865px;top:356px;letter-spacing:-0.14px;">Faktura zaliczkowa:</div>
<div class="inp" style="left:848px;top:375px;width:208px;height:21px;"></div>
<svg style="left:1042px;top:384px" width="7" height="4" viewBox="0 0 7 4"><path d="M0.5 0h6L3.5 3.2z" fill="#606060"/></svg>
<svg style="left:847px;top:400px" width="16" height="16" viewBox="0 0 16 16"><path d="M4.2 3.4L7 2H14.2L15.2 3V9.6H4.2z" fill="#8c8c8c"/><path d="M4.2 3.4L7 2H14.2L15.2 3L9.6 4.4H4.2z" fill="#c4c4c4"/><path d="M9.6 4.4H15.2V9.6H9.6z" fill="#9a9a9a"/><path d="M9.4 8.6Q12.4 6.6 15.2 8.6V10.6H9.4z" fill="#d92a12"/><circle cx="12.6" cy="10.6" r="1.9" fill="#262626"/><circle cx="12.6" cy="10.6" r="0.8" fill="#c8c8c8"/><path d="M1 5.8Q1 4.6 2.2 4.6H8.4Q9.6 4.6 9.6 5.8V13.6H1z" fill="#ee3d16"/><path d="M7.8 4.6H8.4Q9.6 4.6 9.6 5.8V13.6H7.8z" fill="#d42a10"/><rect x="2.1" y="6" width="5" height="1.9" rx="0.4" fill="#5f93e4"/><rect x="8.2" y="6" width="1" height="2" fill="#7fa8ea"/><rect x="2.2" y="10.2" width="5" height="1" fill="#4a2a26"/><rect x="1.8" y="11.2" width="1.3" height="1.1" fill="#fff3e0"/><rect x="8" y="11.2" width="1.2" height="1.1" fill="#fff3e0"/><rect x="7.6" y="12.6" width="2.4" height="1.4" fill="#2a2a2a"/></svg>
<div class="t" style="left:865px;top:400px;">Środek transportu:</div>
<div class="inp" style="left:848px;top:419px;width:208px;height:21px;"></div>
</div>
</div>
</div>
<div class="g summaries">
<div style="left:114px;top:689px;width:480px;height:191px;background:#f0f0f0;border:1px solid #c4c4c4;"></div>
<div style="left:115px;top:690px;width:478px;height:25px;background:#d2d2d2;border-bottom:1px solid #c9c9c9;"></div>
<div class="t b" style="left:124px;top:694px;letter-spacing:-0.04px;">Podsumowanie faktury</div>
<div style="left:597px;top:689px;width:480px;height:191px;background:#f0f0f0;border:1px solid #c4c4c4;"></div>
<div style="left:598px;top:690px;width:478px;height:25px;background:#d2d2d2;border-bottom:1px solid #c9c9c9;"></div>
<div class="t b" style="left:607px;top:694px;letter-spacing:-0.20px;">Podsumowanie faktury w PLN</div>
<div style="left:129px;top:732px;width:450px;height:130px;background:#fff;border:1px solid #a2a2a2;"></div>
<div style="left:129px;top:732px;width:450px;height:29px;background:#f0f0f0;border:2px solid #9c9c9c;border-right-width:1px;border-bottom-width:1px;"></div>
<div style="left:250px;top:734px;width:1px;height:26px;background:#a8a8a8;"></div>
<div style="left:335px;top:734px;width:1px;height:26px;background:#a8a8a8;"></div>
<div style="left:456px;top:734px;width:1px;height:26px;background:#a8a8a8;"></div>
<div class="t" style="right:844px;top:739px;letter-spacing:0.36px;">Netto</div>
<div class="t c" style="left:193px;width:200px;top:739px;letter-spacing:-0.22px;">Stawka VAT</div>
<div class="t" style="right:637px;top:739px;letter-spacing:-0.07px;">VAT</div>
<div class="t" style="right:517px;top:739px;letter-spacing:0.25px;">Brutto</div>
<div style="left:130px;top:761px;width:448px;height:20px;background:#dadada;border-bottom:1px solid #c6c6c6;"></div>
<div style="left:250px;top:761px;width:1px;height:19px;background:#c6c6c6;"></div>
<div style="left:335px;top:761px;width:1px;height:19px;background:#c6c6c6;"></div>
<div style="left:456px;top:761px;width:1px;height:19px;background:#c6c6c6;"></div>
<div class="t" style="right:840px;top:763px;letter-spacing:-0.50px;">30 000,00</div>
<div class="t c" style="left:193px;width:200px;top:763px;letter-spacing:-0.57px;">NP UE</div>
<div class="t" style="right:637px;top:763px;letter-spacing:-0.49px;">0,00</div>
<div class="t" style="right:516px;top:763px;letter-spacing:-0.50px;">30 000,00</div>
<div style="left:130px;top:828px;width:448px;height:33px;background:#f0f0f0;border-top:1px solid #b8b8b8;"></div>
<div style="left:133px;top:831px;width:116px;height:27px;background:#fff;border:1px solid #c0c0c0;"></div>
<div class="t" style="right:848px;top:837px;letter-spacing:-0.50px;">30 000,00</div>
<div style="left:338px;top:831px;width:117px;height:27px;background:#fff;border:1px solid #c0c0c0;"></div>
<div class="t" style="right:642px;top:837px;letter-spacing:-0.49px;">0,00</div>
<div style="left:459px;top:831px;width:116px;height:27px;background:#fff;border:1px solid #c0c0c0;"></div>
<div class="t" style="right:522px;top:837px;letter-spacing:-0.50px;">30 000,00</div>
<div style="left:612px;top:732px;width:450px;height:130px;background:#fff;border:1px solid #a2a2a2;"></div>
<div style="left:612px;top:732px;width:450px;height:29px;background:#f0f0f0;border:2px solid #9c9c9c;border-right-width:1px;border-bottom-width:1px;"></div>
<div style="left:733px;top:734px;width:1px;height:26px;background:#a8a8a8;"></div>
<div style="left:818px;top:734px;width:1px;height:26px;background:#a8a8a8;"></div>
<div style="left:939px;top:734px;width:1px;height:26px;background:#a8a8a8;"></div>
<div class="t" style="right:361px;top:739px;letter-spacing:0.36px;">Netto</div>
<div class="t c" style="left:676px;width:200px;top:739px;letter-spacing:-0.22px;">Stawka VAT</div>
<div class="t" style="right:154px;top:739px;letter-spacing:-0.07px;">VAT</div>
<div class="t" style="right:34px;top:739px;letter-spacing:0.25px;">Brutto</div>
<div style="left:613px;top:761px;width:448px;height:20px;background:#dadada;border-bottom:1px solid #c6c6c6;"></div>
<div style="left:733px;top:761px;width:1px;height:19px;background:#c6c6c6;"></div>
<div style="left:818px;top:761px;width:1px;height:19px;background:#c6c6c6;"></div>
<div style="left:939px;top:761px;width:1px;height:19px;background:#c6c6c6;"></div>
<div class="t" style="right:357px;top:763px;letter-spacing:-0.50px;">141 225,00</div>
<div class="t c" style="left:676px;width:200px;top:763px;letter-spacing:-0.57px;">NP UE</div>
<div class="t" style="right:154px;top:763px;letter-spacing:-0.49px;">0,00</div>
<div class="t" style="right:33px;top:763px;letter-spacing:-0.50px;">141 225,00</div>
<div style="left:613px;top:828px;width:448px;height:33px;background:#f0f0f0;border-top:1px solid #b8b8b8;"></div>
<div style="left:616px;top:831px;width:116px;height:27px;background:#fff;border:1px solid #c0c0c0;"></div>
<div class="t" style="right:365px;top:837px;letter-spacing:-0.50px;">141 225,00</div>
<div style="left:821px;top:831px;width:117px;height:27px;background:#fff;border:1px solid #c0c0c0;"></div>
<div class="t" style="right:159px;top:837px;letter-spacing:-0.49px;">0,00</div>
<div style="left:942px;top:831px;width:116px;height:27px;background:#fff;border:1px solid #c0c0c0;"></div>
<div class="t" style="right:39px;top:837px;letter-spacing:-0.50px;">141 225,00</div>
</div>
<div class="g statusbar">
<div style="left:11px;top:882px;width:1068px;height:23px;background:#dedede;border-top:1px solid #c6c6c6;"></div>
<div style="left:115px;top:884px;width:1px;height:19px;background:#a0a0a0;"></div>
<div style="left:1072px;top:889px;width:2px;height:2px;background:#8c8c8c;"></div>
<div style="left:1072px;top:893px;width:2px;height:2px;background:#8c8c8c;"></div>
<div style="left:1072px;top:897px;width:2px;height:2px;background:#8c8c8c;"></div>
<div style="left:1068px;top:893px;width:2px;height:2px;background:#8c8c8c;"></div>
<div style="left:1068px;top:897px;width:2px;height:2px;background:#8c8c8c;"></div>
<div style="left:1064px;top:897px;width:2px;height:2px;background:#8c8c8c;"></div>
</div>
</div>
</body></html>
